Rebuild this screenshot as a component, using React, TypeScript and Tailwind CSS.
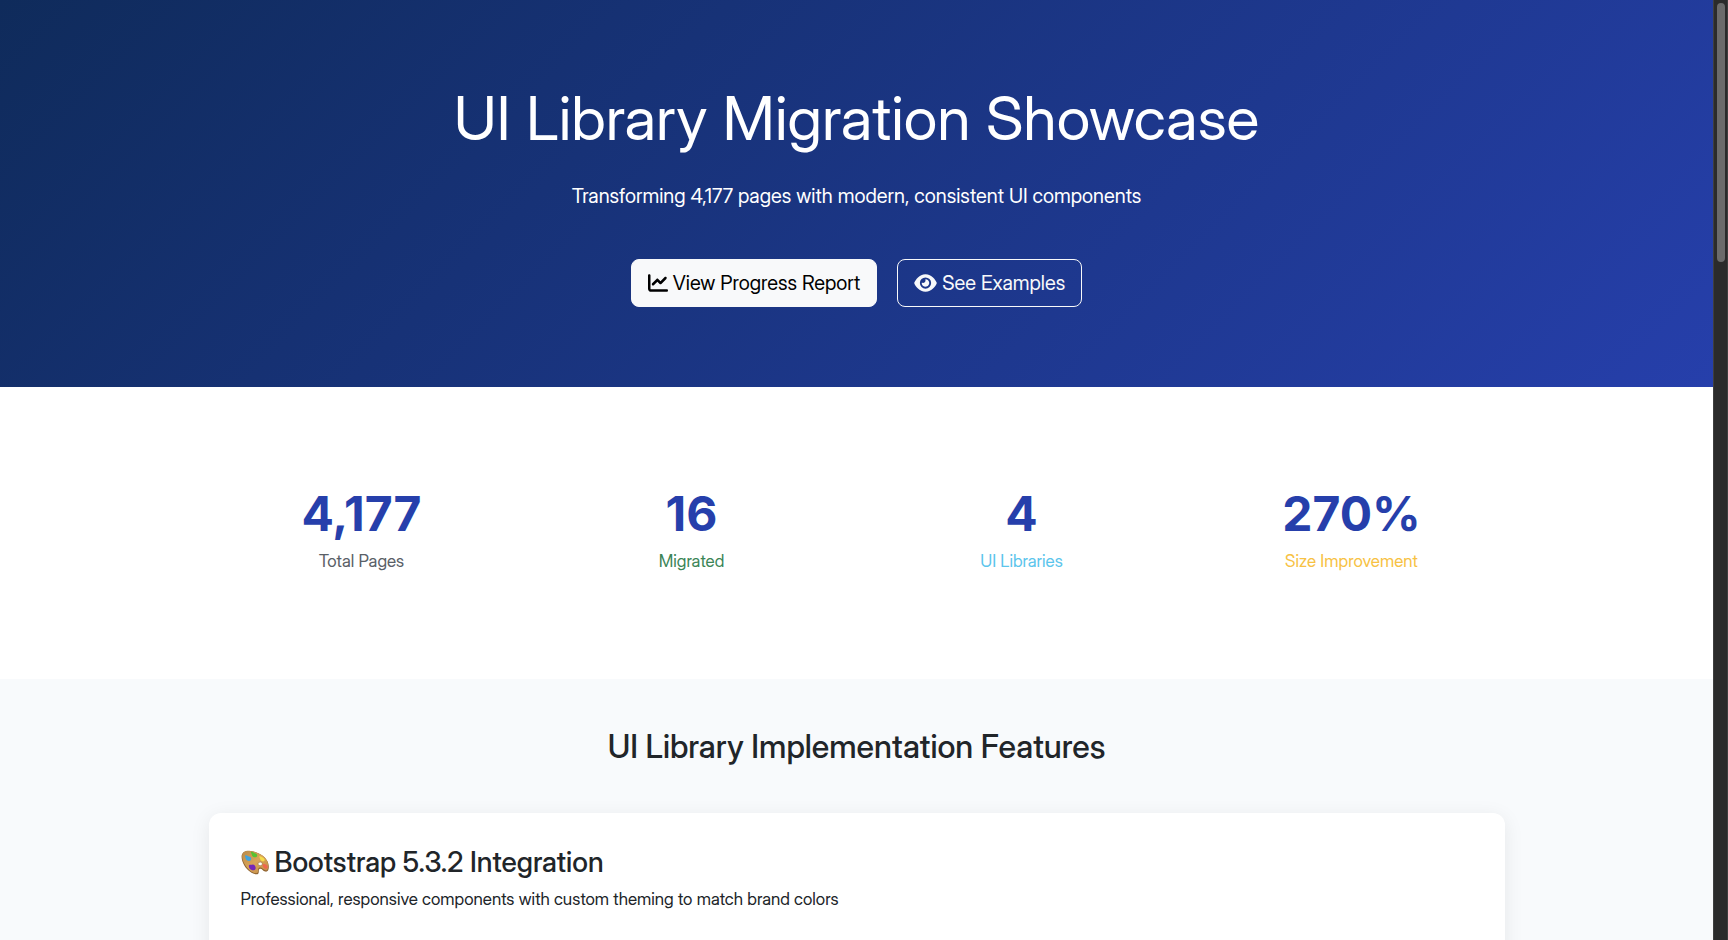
import { FaChartLine, FaEye } from "react-icons/fa6";

const stats = [
  { value: "4,177", label: "Total Pages", tone: "text-[#5a6067]" },
  { value: "16", label: "Migrated", tone: "text-[#3c8557]" },
  { value: "4", label: "UI Libraries", tone: "text-[#5cc5ec]" },
  { value: "270%", label: "Size Improvement", tone: "text-[#f7c244]" },
];

function Palette() {
  return (
    <svg viewBox="0 0 28 28" className="size-7 shrink-0" role="img" aria-label="Palette">
      <defs>
        <linearGradient id="wood" x1="0" y1="0" x2="1" y2="1">
          <stop offset="0" stopColor="#b98a4a" />
          <stop offset="0.5" stopColor="#d9a558" />
          <stop offset="1" stopColor="#c08a45" />
        </linearGradient>
      </defs>
      <path
        d="M0.6 9C0.4 4 4.6 2.4 9.5 3C17.5 4 25.5 8.4 27.3 15.4C28.7 21 27 24.4 24.2 23.6C21.8 22.9 21 20.4 19 20.8C17 21.3 18.4 23.8 17.4 25.4C16.2 27.2 12.6 26.4 8.8 23.6C4.6 20.5 0.8 14.8 0.6 9Z"
        fill="#8e6230"
      />
      <path
        d="M1.1 8.3C1 3.9 4.8 2.4 9.5 3C17.5 4 25 8.2 26.8 14.8C28 19.6 27 23 24.3 22.3C22 21.7 21 19.1 18.7 19.6C16.4 20.2 17.8 22.8 16.8 24.4C15.6 26 12.4 25.2 8.8 22.4C4.8 19.3 1.3 13.4 1.1 8.3Z"
        fill="url(#wood)"
      />
      <ellipse cx="19.2" cy="15.9" rx="2.2" ry="1.8" fill="#fff" stroke="#8e6230" strokeWidth="0.5" />
      <path d="M4.4 7.3C5.8 6.8 6.4 8.3 8 8.6C10.2 8.9 11 11.2 9.6 12.5C8 13.7 5 12.5 4.6 10.2C4.4 8.9 3.5 8.2 4.4 7.3Z" fill="#3fa4e0" />
      <path d="M10.2 4C11.6 3.4 12.2 5 13.7 5.2C16 5.5 17 7.8 15.5 9C13.8 10 11.2 8.8 10.9 6.9C10.7 5.6 9.4 4.8 10.2 4Z" fill="#56c231" />
      <path d="M18.4 8.3C19.8 7.7 20.6 8.9 21.9 9.6C23.8 10.6 24.4 12.6 22.8 13.3C21 13.9 19.2 12.2 19 10.6C18.9 9.6 17.7 9 18.4 8.3Z" fill="#f5dc4b" />
      <path d="M22 16.2C23.2 15.4 25.9 16.6 26.6 18.7C27 20.5 25.2 21.3 23.6 20.2C22.2 19.3 21.1 17.2 22 16.2Z" fill="#ef6650" />
      <path d="M7.8 18C7.7 16.1 9.8 17.2 11.2 16.7C13.4 16.1 15.4 19 14.4 21.3C13.4 23.1 9.8 22.3 8.6 20.5C8 19.7 7.8 18.8 7.8 18Z" fill="#7527b8" />
    </svg>
  );
}

function Hero() {
  return (
    <header className="bg-[linear-gradient(135deg,#0f2b5b,#263fab)] px-3 py-20 text-center text-white">
      <h1 className="mb-6 text-[61px] leading-[77px] font-normal">UI Library Migration Showcase</h1>
      <p className="mb-12 text-xl leading-[30px]">
        Transforming 4,177 pages with modern, consistent UI components
      </p>
      <div className="flex flex-wrap justify-center gap-5 text-xl leading-[30px]">
        <a href="#progress" className="flex items-center gap-[5px] rounded-lg border border-[#f8f9fa] bg-[#f8f9fa] px-4 py-2 text-black">
          <FaChartLine aria-hidden="true" className="size-5" />
          View Progress Report
        </a>
        <a href="#examples" className="flex items-center gap-[5px] rounded-lg border border-[#f8f9fa] px-4 py-2 text-[#f8f9fa]">
          <FaEye aria-hidden="true" className="h-5 w-[23px]" />
          See Examples
        </a>
      </div>
    </header>
  );
}

function Stats() {
  return (
    <section id="progress" className="bg-white pt-[98px] pb-[106px]">
      <dl className="mx-auto grid max-w-[1320px] grid-cols-2 gap-y-8 text-center md:grid-cols-4">
        {stats.map((s) => (
          <div key={s.label} className="flex flex-col-reverse gap-[6px]">
            <dt className={`text-[17px] leading-6 ${s.tone}`}>{s.label}</dt>
            <dd className="font-['Inter',sans-serif] text-5xl leading-[58px] font-bold text-[#263fab]">{s.value}</dd>
          </div>
        ))}
      </dl>
    </section>
  );
}

function Features() {
  return (
    <section id="examples" className="grow bg-[#f8fafc] py-12">
      <div className="mx-auto max-w-[1320px] px-3">
        <h2 className="mb-[46px] text-center text-[32px] leading-10 font-medium">
          UI Library Implementation Features
        </h2>
        <article className="rounded-xl bg-white px-8 pt-8 pb-16 shadow-[0_4px_20px_rgba(0,0,0,0.08)]">
          <h3 className="mb-2 flex items-center gap-[6px] text-[28px] leading-[34px] font-medium">
            <Palette />
            Bootstrap 5.3.2 Integration
          </h3>
          <p className="text-[17px] leading-6">
            Professional, responsive components with custom theming to match brand colors
          </p>
        </article>
      </div>
    </section>
  );
}

export default function App() {
  return (
    <div className="flex h-screen font-['Inter_Display','Inter',sans-serif] text-[#212529]">
      <main className="flex min-w-0 grow flex-col overflow-y-auto [scrollbar-width:none]">
        <Hero />
        <Stats />
        <Features />
      </main>
      <div aria-hidden="true" className="w-[15px] shrink-0 border-x border-[#3f3f3f] bg-[#2b2b2b] px-[3px] pt-[3px]">
        <div className="h-[27.6%] w-2 rounded-full bg-[#6b6b6b]" />
      </div>
    </div>
  );
}
